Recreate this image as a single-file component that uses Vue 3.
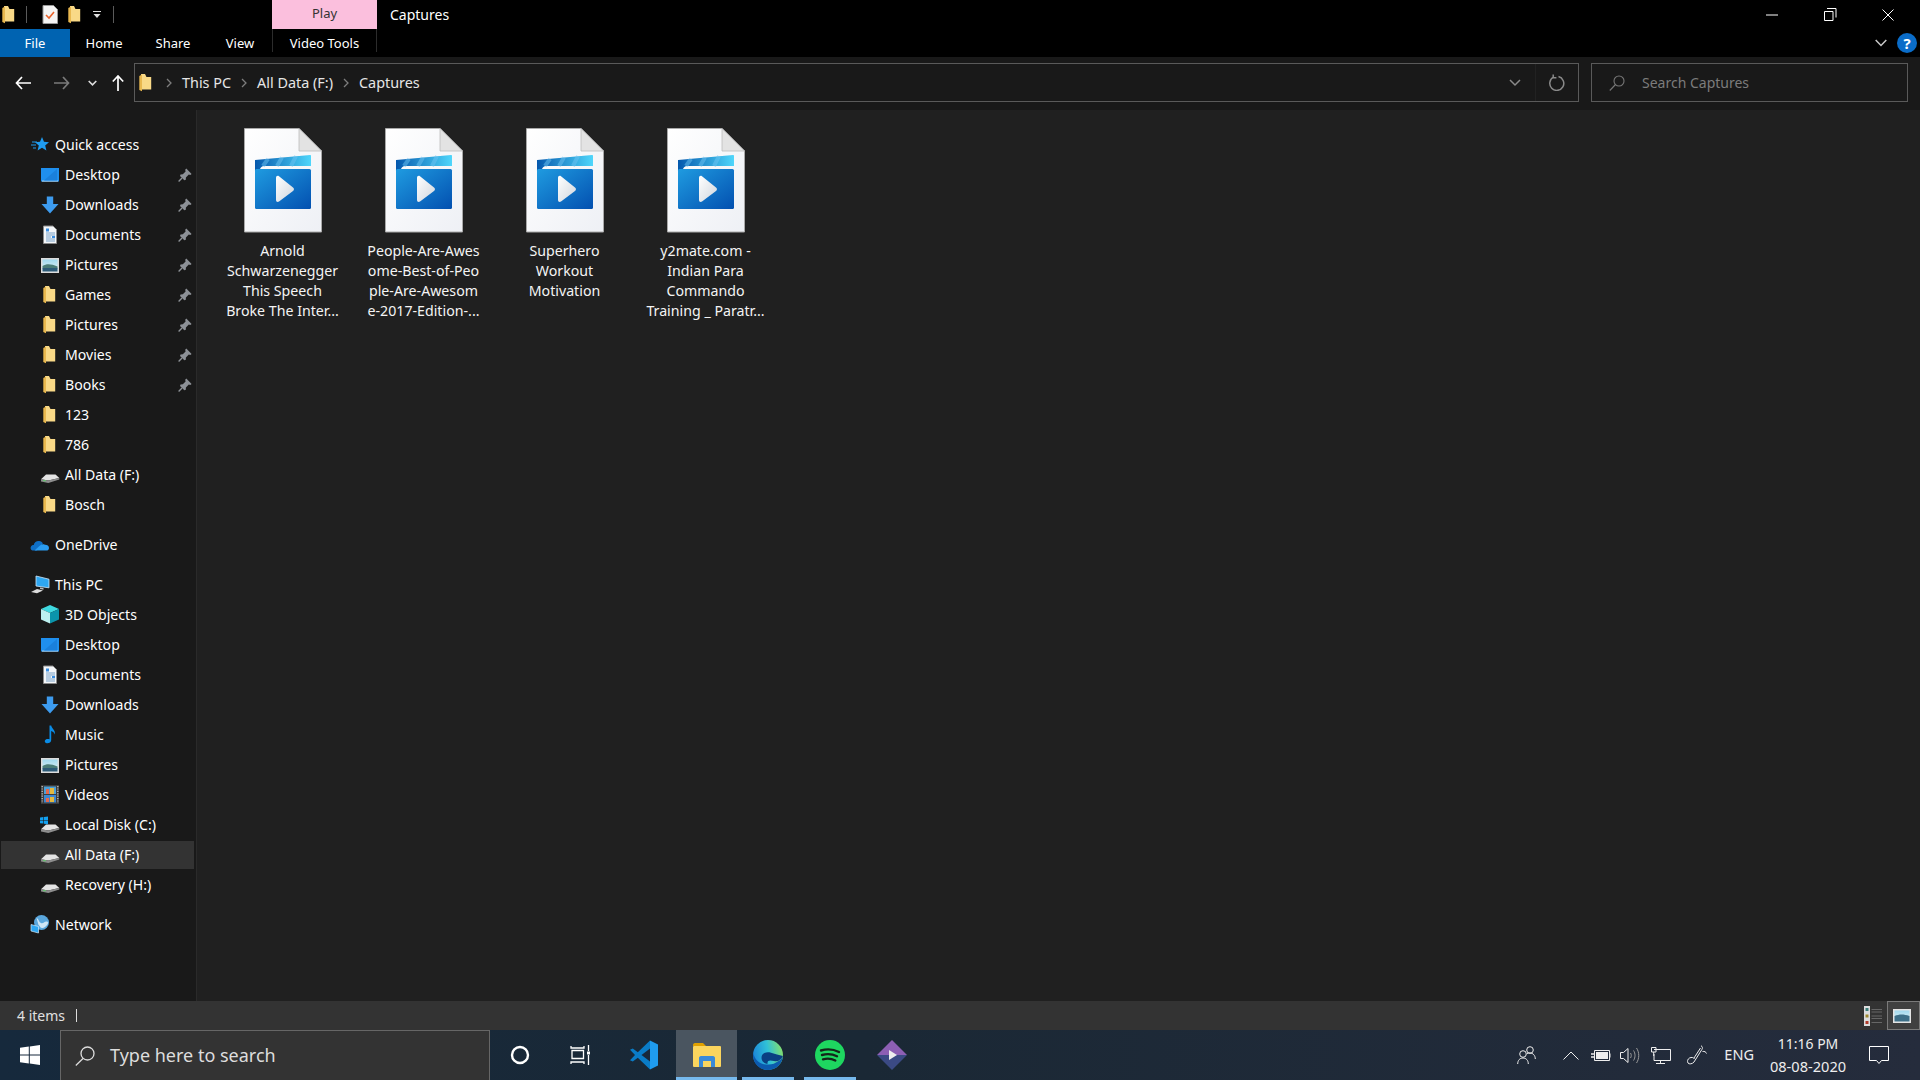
<script setup>
const quick = [
  { n: 'Desktop', i: 'desktop', pin: 1 }, { n: 'Downloads', i: 'down', pin: 1 }, { n: 'Documents', i: 'docs', pin: 1 },
  { n: 'Pictures', i: 'pics', pin: 1 }, { n: 'Games', i: 'folder', pin: 1 }, { n: 'Pictures', i: 'folder', pin: 1 },
  { n: 'Movies', i: 'folder', pin: 1 }, { n: 'Books', i: 'folder', pin: 1 }, { n: '123', i: 'folder' }, { n: '786', i: 'folder' },
  { n: 'All Data (F:)', i: 'drive' }, { n: 'Bosch', i: 'folder' }
]
const pc = [
  { n: '3D Objects', i: 'cube' }, { n: 'Desktop', i: 'desktop' }, { n: 'Documents', i: 'docs' }, { n: 'Downloads', i: 'down' },
  { n: 'Music', i: 'music' }, { n: 'Pictures', i: 'pics' }, { n: 'Videos', i: 'film' }, { n: 'Local Disk (C:)', i: 'cdrive' },
  { n: 'All Data (F:)', i: 'drive', sel: 1 }, { n: 'Recovery (H:)', i: 'drive' }
]
const groups = [
  { head: { n: 'Quick access', i: 'star' }, items: quick },
  { head: { n: 'OneDrive', i: 'cloud' }, items: [] },
  { head: { n: 'This PC', i: 'pc' }, items: pc },
  { head: { n: 'Network', i: 'net' }, items: [] }
]
const files = [
  ['Arnold', 'Schwarzenegger', 'This Speech', 'Broke The Inter...'],
  ['People-Are-Awes', 'ome-Best-of-Peo', 'ple-Are-Awesom', 'e-2017-Edition-...'],
  ['Superhero', 'Workout', 'Motivation'],
  ['y2mate.com -', 'Indian Para', 'Commando', 'Training _ Paratr...']
]
const crumbs = ['This PC', 'All Data (F:)', 'Captures']
</script>

<template>
  <svg class="defs" aria-hidden="true">
    <defs>
      <linearGradient id="gBoard" x1="0" y1="0" x2="1" y2="1"><stop offset="0" stop-color="#1f9be0"/><stop offset="1" stop-color="#0350b0"/></linearGradient>
      <linearGradient id="gStick" x1="0" y1="0" x2="1" y2="0"><stop offset="0" stop-color="#0458ad"/><stop offset="1" stop-color="#4fd6fb"/></linearGradient>
      <linearGradient id="gPlay" x1="0" y1="0" x2="1" y2="1"><stop offset="0" stop-color="#fff"/><stop offset="1" stop-color="#cfd6de"/></linearGradient>
      <linearGradient id="gPage" x1="0" y1="0" x2="1" y2="1"><stop offset="0" stop-color="#fff"/><stop offset="1" stop-color="#eef0f5"/></linearGradient>
      <linearGradient id="gSky" x1="0" y1="0" x2="0" y2="1"><stop offset="0" stop-color="#9fd8ee"/><stop offset="1" stop-color="#e8f4f4"/></linearGradient>
      <linearGradient id="gEdge" x1="0" y1=".5" x2="1" y2=".3"><stop offset="0" stop-color="#1c86d8"/><stop offset=".5" stop-color="#2fc0d8"/><stop offset="1" stop-color="#86e06a"/></linearGradient>
    </defs>
    <symbol id="folder" viewBox="0 0 20 20"><path d="M5 1h4l1.500 3H15.200v12.500H5z" fill="#f9d987"/><path d="M3.300 3 6 1.400V18.200L3.300 17z" fill="#e9b84f"/></symbol>
    <symbol id="desktop" viewBox="0 0 20 20"><rect x="1" y="3" width="18" height="13.500" fill="#1f8fee"/><path d="M2 15.600h16v1H2z" fill="#bfe2fb"/><path d="M4 15.500 17 4v11.500z" fill="#1a80dc"/></symbol>
    <symbol id="down" viewBox="0 0 20 20"><path d="M6.800 1.500h6.400v7.500h5.300L10 18.500 1.500 9h5.300z" fill="#3d9bee"/></symbol>
    <symbol id="docs" viewBox="0 0 20 20"><path d="M3.500 1h9.500l3.500 3.500V18.500H3.500z" fill="#f4f6f8" stroke="#8a8a8a"/><path d="M6 3.500h3v3H6z" fill="#3a8ee0"/><path d="M6 8h9M6 10h9M6 12h5M6 14h9M6 16h9" stroke="#7aa2c8"/><path d="M12 11h3v2h-3z" fill="#3a8ee0"/></symbol>
    <symbol id="pics" viewBox="0 0 20 20"><rect x="1" y="3" width="18" height="15" fill="#dcdcdc"/><rect x="2.500" y="4.500" width="15" height="12" fill="url(#gSky)"/><path d="M2.500 11c4-2.500 8-2.500 15 .5v2h-15z" fill="#4b7d78"/><path d="M2.500 13h15v3.500h-15z" fill="#2d5b78"/></symbol>
    <symbol id="drive" viewBox="0 0 20 20"><path d="M1 14.200 6 9.500h9.500l3.800 3.400-11 2.600z" fill="#e4e4e4"/><path d="M1 14.200l7.300 1.300 11-2.600v1.600L8.300 18 1 16.400z" fill="#8d8d8d"/><path d="M3 15.200h3v1H3z" fill="#5fc66b"/></symbol>
    <symbol id="cdrive" viewBox="0 0 20 20"><path d="M1 14.200 6 9.500h9.500l3.800 3.400-11 2.600z" fill="#e4e4e4"/><path d="M1 14.200l7.300 1.300 11-2.600v1.600L8.300 18 1 16.400z" fill="#8d8d8d"/><path d="M0 2.500 3.400 2v3H0zM4 2l4-.5V5H4zM0 5.600h3.400v3L0 8.200zM4 5.600h4v3.600L4 8.700z" fill="#12a0f0"/></symbol>
    <symbol id="cube" viewBox="0 0 20 20"><path d="M10 0 19 4 10 8 1 4z" fill="#3fd9e0"/><path d="M1 4 10 8v10.500L1 14.500z" fill="#bdf1f0"/><path d="M19 4 10 8v10.500l9-4z" fill="#0b94ab"/></symbol>
    <symbol id="music" viewBox="0 0 20 20"><path d="M9.500 .5h1.700c.4 3 4.500 4.500 3.600 9-.8-2-2.200-3-3.600-3.400V15c0 2.400-2.400 3.600-4.400 3.300-2.500-.4-2.600-3-.6-4 1-.5 2.200-.5 3.300 0z" fill="#0a8ce6"/></symbol>
    <symbol id="film" viewBox="0 0 20 20"><rect x="1" y="0" width="18" height="19" fill="#3c3c3c"/><path d="M2.200 1v17M17.800 1v17" stroke="#bbb" stroke-width="1.400" stroke-dasharray="1.200 1.200"/><rect x="4" y="1.500" width="12" height="7.500" fill="#4c9fd8"/><rect x="4" y="10" width="12" height="7.500" fill="#3c86d0"/><path d="M6 4h3v5H6zM6 13h3v4H6z" fill="#e4684c"/><path d="M10 3h4v6h-4zM10 12h4v5h-4z" fill="#e2b83e"/></symbol>
    <symbol id="star" viewBox="0 0 20 20"><path d="M12 2l2 4.800 5 .4-3.800 3.300 1.200 5-4.400-2.700-4.400 2.700 1.200-5L5 7.200l5-.4z" fill="#1f9cf0"/><path d="M2 7h5M1 10h5M3 13h3" stroke="#1f9cf0"/></symbol>
    <symbol id="cloud" viewBox="0 0 20 20"><path d="M3.500 15.500C.8 15.500 0 13 1 11.400c.7-1.100 1.700-1.400 2.700-1.400.6-2.500 2.900-4.200 5.500-3.900 1.600.2 3 1.100 3.700 2.500l-6 7z" fill="#0f6fc6"/><path d="M4.500 15.500 10 10.500c1.400-1.200 3.500-1.500 4.800-.8 2-.2 4.200 1 4.200 3.200 0 1.600-1.200 2.600-2.800 2.600z" fill="#2a9cf0"/></symbol>
    <symbol id="pc" viewBox="0 0 20 20"><path d="M6 1l13 3.200v8.600L6 11z" fill="#2ea7f2" stroke="#cfe9fb" stroke-width=".8"/><path d="M10 12.500l3.500.6v1.600L10 14z" fill="#bbb"/><path d="M1 17l6-3 6 1.500-6 2.800z" fill="#dcdcdc"/></symbol>
    <symbol id="net" viewBox="0 0 20 20"><circle cx="11.500" cy="7.500" r="7.500" fill="#5aa7dd"/><path d="M6.500 3c3 1.500 2 4 4.500 5s3-2 6-1.500-1 6-4 6.500-3-2-4.500-3z" fill="#cfe6f5"/><path d="M1 9.500l7.500 2V18L1 16z" fill="#2ea7f2" stroke="#cfe9fb" stroke-width=".7"/></symbol>
    <symbol id="pin" viewBox="0 0 14 14"><path d="M8.300.6 13.600 5.900 12.300 7 10.800 6.600 7.900 9.400 7.800 11.700 6.300 12.200 2 7.900 2.500 6.400 4.800 6.300 7.600 3.400 7.200 1.800z" fill="#8d9197"/><path d="M4 10 .6 13.400" stroke="#8d9197" stroke-width="1.400"/></symbol>
    <symbol id="video" viewBox="0 0 78 105">
      <path d="M.5.5H55L77.500 23V104H.5z" fill="url(#gPage)" stroke="#a9a9a9"/>
      <path d="M55 .5V23H77.500z" fill="#e3e3e3" stroke="#bdbdbd" stroke-width=".8"/>
      <path d="M11 32 66 27c.7 0 1 .4 1 1v10H20c-2 0-3.500 1.500-4 3l-1.500 7c-.4 2-3.500 2.500-3.500 0z" fill="url(#gStick)"/>
      <path d="M24 30.800 19 38M38 29.500 33 38M52 28.200 47 38" stroke="#6ec4f2" stroke-opacity=".5" stroke-width="4"/>
      <rect x="11" y="41" width="56" height="40" rx="1.500" fill="url(#gBoard)"/>
      <path d="M32 50c0-2 1.500-2.800 3-1.800L49 59.500c1.300 1 1.300 2.600 0 3.600L35 73.600c-1.500 1-3 .2-3-1.800z" fill="url(#gPlay)"/>
    </symbol>
  </svg>

  <div class="window">
    <header class="titlebar">
      <svg class="t-folder" width="20" height="20"><use href="#folder"/></svg>
      <i class="sep"></i>
      <svg class="t-check" width="16" height="19" viewBox="0 0 16 19"><path d="M1 .5h10.500l4 4V18.500H1z" fill="#f4f4f4" stroke="#999"/><path d="M4 10l3 3 5-6" fill="none" stroke="#e8622c" stroke-width="1.600"/></svg>
      <svg class="t-folder2" width="20" height="20"><use href="#folder"/></svg>
      <svg class="t-drop" width="8" height="8" viewBox="0 0 8 8"><path d="M0 .5h8" stroke="#ddd"/><path d="M.5 3h7L4 7z" fill="#ddd"/></svg>
      <i class="sep sep2"></i>
      <div class="play">Play</div>
      <div class="doc-title">Captures</div>
      <div class="wctrl">
        <svg width="58" height="12" viewBox="0 0 58 12"><path d="M0 6h12" stroke="#fff"/></svg>
        <svg width="58" height="13" viewBox="0 0 58 13"><path d="M3 .5h9v9M.5 3.500h8.500v9H.5z" fill="none" stroke="#fff"/></svg>
        <svg width="12" height="12" viewBox="0 0 12 12"><path d="M.5.500l11 11M11.500.500l-11 11" stroke="#fff"/></svg>
      </div>
    </header>

    <nav class="tabs">
      <div class="tab file">File</div>
      <div class="tab w68">Home</div>
      <div class="tab w70">Share</div>
      <div class="tab w64">View</div>
      <div class="tab ctx">Video Tools</div>
      <div class="tabs-right">
        <svg width="12" height="8" viewBox="0 0 12 8"><path d="M.7 1 6 6.500 11.300 1" fill="none" stroke="#c8c8c8" stroke-width="1.500"/></svg>
        <span class="help">?</span>
      </div>
    </nav>

    <div class="addrbar">
      <div class="navbtns">
        <svg class="b-back" width="16" height="14" viewBox="0 0 16 14"><path d="M7 1 1.500 7 7 13M1.500 7H16" fill="none" stroke="#fff" stroke-width="1.700"/></svg>
        <svg class="b-fwd" width="16" height="14" viewBox="0 0 16 14"><path d="M9 1l5.500 6L9 13M14.500 7H0" fill="none" stroke="#7a7a7a" stroke-width="1.700"/></svg>
        <svg class="b-chev" width="9" height="6" viewBox="0 0 9 6"><path d="M.7 1 4.500 4.800 8.300 1" fill="none" stroke="#ddd" stroke-width="1.600"/></svg>
        <svg class="b-up" width="12" height="16" viewBox="0 0 12 16"><path d="M.8 6.500 6 1l5.200 5.500M6 1V16" fill="none" stroke="#fff" stroke-width="1.700"/></svg>
      </div>
      <div class="addr">
        <svg class="a-folder" width="20" height="20"><use href="#folder"/></svg>
        <template v-for="c in crumbs" :key="c">
          <svg class="crumb-sep" width="6" height="10" viewBox="0 0 6 10"><path d="M1 1l4 4-4 4" fill="none" stroke="#7d7d7d" stroke-width="1.300"/></svg>
          <span class="crumb">{{ c }}</span>
        </template>
        <svg class="a-drop" width="12" height="8" viewBox="0 0 12 8"><path d="M1 1l5 5 5-5" fill="none" stroke="#8a8a8a" stroke-width="1.500"/></svg>
        <div class="a-refresh">
          <svg width="16" height="17" viewBox="0 0 16 17"><path d="M4.500 3.200a7 7 0 1 0 5-.6M4.200 .5v3.200h3.200" fill="none" stroke="#8a8a8a" stroke-width="1.500"/></svg>
        </div>
      </div>
      <div class="search">
        <svg width="16" height="16" viewBox="0 0 16 16"><circle cx="10" cy="6" r="5" fill="none" stroke="#777" stroke-width="1.100"/><path d="M6.500 9.500.8 15.500" stroke="#777" stroke-width="1.100"/></svg>
        <span>Search Captures</span>
      </div>
    </div>

    <main class="main">
      <aside class="tree">
        <section v-for="g in groups" :key="g.head.n" class="group">
          <div class="row top">
            <svg class="ic" width="20" height="20"><use :href="'#' + g.head.i"/></svg>
            <span class="txt">{{ g.head.n }}</span>
          </div>
          <div v-for="it in g.items" :key="it.n + it.i" class="row child" :class="{ sel: it.sel }">
            <svg class="ic" width="20" height="20"><use :href="'#' + it.i"/></svg>
            <span class="txt">{{ it.n }}</span>
            <svg v-if="it.pin" class="pin" width="14" height="14"><use href="#pin"/></svg>
          </div>
        </section>
      </aside>
      <section class="content">
        <article v-for="(f, i) in files" :key="i" class="file-item">
          <svg width="78" height="105"><use href="#video"/></svg>
          <div class="label"><div v-for="l in f" :key="l">{{ l }}</div></div>
        </article>
      </section>
    </main>

    <footer class="status">
      <span class="txt">4 items</span>
      <i class="st-sep"></i>
      <div class="views">
        <svg width="18" height="20" viewBox="0 0 18 20"><path d="M0 0h6v20H0z" fill="#ddd"/><path d="M1.500 2h3v3h-3z" fill="#3a7d78"/><path d="M1.500 8.500h3v3h-3z" fill="#a08a30"/><path d="M1.500 15h3v3h-3z" fill="#b03a2a"/><path d="M7.500 3.500H18M7.500 6H18M7.500 10H18M7.500 12.500H18M7.500 16.500H18" stroke="#666"/></svg>
        <div class="view-on">
          <svg width="18" height="14" viewBox="0 0 18 14"><rect width="18" height="14" fill="#e4e4e4"/><rect x="1.500" y="1.500" width="15" height="11" fill="url(#gSky)"/><path d="M1.500 7c5-2 9-2 15 0v5.500h-15z" fill="#3d6f88"/></svg>
        </div>
      </div>
    </footer>

    <div class="taskbar">
      <div class="start">
        <svg width="20" height="20" viewBox="0 0 20 20"><path d="M0 2.800 8.800 1.600V9.500H0zM9.800 1.400 20 0V9.500H9.800zM0 10.500h8.800v8L0 17.200zM9.800 10.500H20V20L9.800 18.600z" fill="#fff"/></svg>
      </div>
      <div class="tsearch">
        <svg width="20" height="20" viewBox="0 0 20 20"><circle cx="12.500" cy="7.500" r="6.500" fill="none" stroke="#ddd" stroke-width="1.300"/><path d="M8 12.500.8 19.500" stroke="#ddd" stroke-width="1.300"/></svg>
        <span class="txt">Type here to search</span>
      </div>
      <div class="tb w60"><svg width="20" height="20" viewBox="0 0 20 20"><circle cx="10" cy="10" r="8" fill="none" stroke="#fff" stroke-width="2.400"/></svg></div>
      <div class="tb w61"><svg width="21" height="20" viewBox="0 0 21 20"><path d="M1 1v2h13V1M2 5.500h11.500v8H2zM1 19v-2h13v2M18.500 0v6M18.500 10v10" fill="none" stroke="#fff" stroke-width="1.300"/><path d="M17 6.500h3v3h-3z" fill="#fff"/></svg></div>
      <div class="tb w65"><svg width="30" height="30" viewBox="0 0 30 30"><path d="M21 .500 8.800 12.200 3.800 8.400 1 9.800 6 15l-5 5.200 2.800 1.400 5-3.800L21 29.500z" fill="#0a7cc7"/><path d="M21 .500 29 4.500v21l-8 4z" fill="#1f9cf0"/><path d="M21 8.500 12.500 15l8.500 6.500z" fill="#18283a"/></svg></div>
      <div class="tb w61 active"><svg width="28" height="24" viewBox="0 0 28 24"><path d="M0 2c0-1 .6-2 2-2h8l3 3h-13z" fill="#e0a000"/><rect y="3" width="28" height="21" rx="1" fill="#fbd55e"/><path d="M6 24v-9c0-1 .7-2 2-2h12c1.300 0 2 1 2 2v9h-4v-6h-8v6z" fill="#3a8ad8"/></svg></div>
      <div class="tb open"><svg width="30" height="30" viewBox="0 0 30 30"><circle cx="15" cy="15" r="15" fill="url(#gEdge)"/><path d="M8.500 18C8.500 13 13.500 11.500 18 12.800 22 14 26 15 29.900 16 28 20 25 22 21 21 17 20 14 20 14.500 24 11 23.500 8.500 21 8.500 18Z" fill="#0a3f82"/><path d="M.2 13.500C2 20 7 24.500 13 24.500c4 0 7 0 10-2 3-1.500 5.500-3.500 6.900-6C29 25 22 30 15 30 6 30-.8 22 .2 13.500Z" fill="#0c5aae"/></svg></div>
      <div class="tb open"><svg width="30" height="30" viewBox="0 0 30 30"><circle cx="15" cy="15" r="15" fill="#1ed760"/><path d="M6 10.500c6-1.800 12.500-1.300 18 1.500M7 15c5-1.400 10.500-1 15 1.300M8 19.300c4-1 8.500-.8 12.300 1.200" fill="none" stroke="#14251a" stroke-width="2.400" stroke-linecap="round"/></svg></div>
      <div class="tb"><svg width="30" height="30" viewBox="0 0 30 30"><path d="M15 0 30 15H0z" fill="#8d5fb4"/><path d="M0 15h30L15 30z" fill="#3b4a84"/><path d="M12 10l8 5-8 5z" fill="#eee"/></svg></div>

      <div class="tray">
        <svg class="tr people" width="19" height="19" viewBox="0 0 19 19"><circle cx="13" cy="4" r="3.300" fill="none" stroke="#eee"/><circle cx="6" cy="8" r="3.300" fill="none" stroke="#eee"/><path d="M.7 18c0-3.500 2-6 5.300-6s5.300 2.500 5.300 6M10 7.500c1-.4 2-.5 3-.5 3 0 5.300 2.500 5.300 6" fill="none" stroke="#eee"/></svg>
        <svg class="tr caret" width="16" height="9" viewBox="0 0 16 9"><path d="M.5 8.500 8 1l7.500 7.500" fill="none" stroke="#eee"/></svg>
        <svg class="tr" width="20" height="13" viewBox="0 0 20 13"><path d="M3.500 1.500h15v10h-15zM19 4.500V8.500" fill="none" stroke="#eee"/><path d="M5 3h12v7H5z" fill="#eee"/><path d="M0 5h3M0 8h3" stroke="#eee" stroke-width="1.400"/></svg>
        <svg class="tr vol" width="20" height="17" viewBox="0 0 20 17"><path d="M.5 5.500h3L8 1.500v14l-4.500-4h-3z" fill="none" stroke="#eee"/><path d="M10.500 6c1 1.500 1 3.500 0 5M13.500 3.500c2 3 2 7 0 10M16.500 1c3 4.500 3 10.500 0 15" fill="none" stroke="#9a9a9a"/></svg>
        <svg class="tr netw" width="20" height="17" viewBox="0 0 20 17"><path d="M3 2.500h16.500v11H3V7M5 16.500h9M9.500 13.500v3" fill="none" stroke="#eee"/><path d="M.5.500h4.500v4.500H.5zM2.700 5v4" fill="none" stroke="#eee"/></svg>
        <svg class="tr penw" width="20" height="20" viewBox="0 0 20 20"><path d="M14 .7c1.700 1 1.700 2.500 1 3.600L7 17c-1.500 2-5 2.500-6 1s-.4-4 1.500-5c2-1 4-.7 5 1M13.500 3 7 13M15.500 6.500c2-.5 3.500.5 4 2" fill="none" stroke="#eee"/></svg>
        <span class="eng txt">ENG</span>
        <div class="clock"><div class="time">11:16 PM</div><div class="date">08-08-2020</div></div>
        <svg class="tr action" width="20" height="20" viewBox="0 0 20 20"><path d="M.5 1.500h19v14h-7L10 18.500 7.500 15.500h-7z" fill="none" stroke="#fff"/></svg>
      </div>
    </div>
  </div>
</template>

<style>
html, body { margin: 0; background: #000; }
</style>

<style scoped>
.defs { display: block; width: 0; height: 0; overflow: hidden; }
.window { width: 1920px; height: 1080px; display: flex; flex-direction: column; overflow: hidden; background: #202020; color: #fff; font-family: "Noto Sans", "Open Sans", sans-serif; font-size: 14.100px; }
.txt { padding-bottom: 2px; }

.titlebar { height: 29px; flex: none; background: #000; display: flex; align-items: center; }
.t-folder { margin-left: -1px; }
.sep { width: 1px; height: 17px; background: #5a5a5a; margin-left: 7px; }
.t-check { margin-left: 15px; }
.t-folder2 { margin-left: 7px; }
.t-drop { margin-left: 8px; }
.sep2 { margin-left: 12px; }
.play { margin-left: 158px; width: 105px; height: 29px; background: #fbbfdd; color: #333; text-align: center; line-height: 27px; font-size: 13px; }
.doc-title { margin-left: 13px; font-size: 14px; padding-bottom: 1px; }
.wctrl { margin-left: auto; margin-right: 26px; display: flex; align-items: center; }

.tabs { height: 28px; flex: none; background: #000; display: flex; align-items: stretch; font-size: 13px; }
.tab { text-align: center; line-height: 28px; }
.file { width: 70px; background: #0063b1; }
.w68 { width: 68px; }
.w70 { width: 70px; }
.w64 { width: 64px; }
.ctx { width: 105px; margin-bottom: 5px; box-sizing: border-box; border-left: 1px solid #2c2c2c; border-right: 1px solid #2c2c2c; }
.tabs-right { margin-left: auto; display: flex; align-items: center; gap: 10px; margin-right: 3px; }
.help { width: 20px; height: 20px; border-radius: 50%; background: #0a6cc8; font-weight: 700; text-align: center; line-height: 20px; font-size: 15px; }

.addrbar { height: 53px; flex: none; box-sizing: border-box; background: #191919; display: flex; padding-top: 6px; }
.navbtns { width: 134px; flex: none; height: 39px; display: flex; align-items: center; }
.b-back { margin-left: 15px; }
.b-fwd { margin-left: 23px; }
.b-chev { margin-left: 18px; }
.b-up { margin-left: 15px; }
.addr { width: 1445px; height: 39px; box-sizing: border-box; border: 1px solid #5a5a5a; display: flex; align-items: center; padding-left: 1px; font-size: 14.400px; color: #e6e6e6; }
.a-folder { margin-left: 0; }
.crumb { padding-bottom: 1px; }
.crumb-sep { margin-left: 10px; margin-right: 10px; }
.a-drop { margin-left: auto; margin-right: 14px; }
.a-refresh { width: 42px; height: 37px; border-left: 1px solid #222; display: flex; align-items: center; justify-content: center; }
.search { width: 317px; height: 39px; box-sizing: border-box; margin-left: 12px; border: 1px solid #5a5a5a; display: flex; align-items: center; padding-left: 17px; gap: 17px; color: #7c7c7c; font-size: 14px; }
.search span { padding-bottom: 1px; }

.main { flex: 1; display: flex; min-height: 0; }
.tree { width: 197px; flex: none; box-sizing: border-box; background: #191919; padding: 21px 2px 0 1px; display: flex; flex-direction: column; gap: 10px; border-right: 1px solid #2a2a2a; }
.row { height: 28px; margin-bottom: 2px; display: flex; align-items: center; color: #fff; white-space: nowrap; }
.top { padding-left: 29px; }
.child { padding-left: 39px; }
.row .ic { flex: none; margin-right: 5px; }
.pin { margin-left: auto; margin-right: 2px; }
.sel { background: #333; }

.content { flex: 1; background: #202020; box-sizing: border-box; padding: 18px 0 0 15px; display: flex; align-items: flex-start; }
.file-item { width: 141px; display: flex; flex-direction: column; align-items: center; }
.label { margin-top: 8px; text-align: center; line-height: 20px; white-space: nowrap; color: #f4f4f4; font-size: 14.200px; }

.status { height: 29px; flex: none; background: #333; display: flex; align-items: center; padding-left: 17px; font-size: 14px; color: #e0e0e0; }
.status .txt { padding-bottom: 1px; }
.st-sep { width: 1px; height: 13px; background: #ddd; margin-left: 11px; }
.views { margin-left: auto; display: flex; align-items: center; gap: 5px; }
.view-on { width: 33px; height: 29px; box-sizing: border-box; background: #404040; border: 1px solid #7a7a7a; padding-right: 3px; display: flex; align-items: center; justify-content: center; }

.taskbar { height: 50px; flex: none; background: linear-gradient(90deg, #16293c 0%, #1a2835 45%, #252c3c 100%); display: flex; align-items: center; }
.start { width: 60px; flex: none; display: flex; justify-content: center; }
.tsearch { width: 430px; height: 50px; flex: none; box-sizing: border-box; background: #333; border: 1px solid #666; border-bottom: 0; display: flex; align-items: center; padding-left: 14px; gap: 15px; font-size: 18px; color: #ddd; }
.tb { width: 62px; height: 50px; flex: none; box-sizing: border-box; display: flex; align-items: center; justify-content: center; border-bottom: 3px solid transparent; padding-top: 3px; }
.w60 { width: 60px; }
.w61 { width: 61px; }
.w65 { width: 65px; }
.active { background: #4a5560; border-bottom-color: #76b9ed; }
.open { border-bottom-color: #76b9ed; border-image: linear-gradient(90deg, transparent 0 6px, #76b9ed 6px calc(100% - 6px), transparent calc(100% - 6px)) 1; }
.tray { margin-left: auto; display: flex; align-items: center; color: #eee; }
.tr { margin-left: 10px; }
.people { margin-right: 17px; }
.caret { margin-right: 2px; }
.vol { margin-left: 9px; }
.netw { margin-left: 11px; }
.penw { margin-left: 16px; }
.eng { margin-left: 17px; font-size: 14.500px; }
.clock { width: 110px; text-align: center; line-height: 23px; margin-left: -1px; }
.time { font-size: 14px; }
.date { font-size: 14.600px; }
.action { margin: 0 31px 0 6px; }
</style>
